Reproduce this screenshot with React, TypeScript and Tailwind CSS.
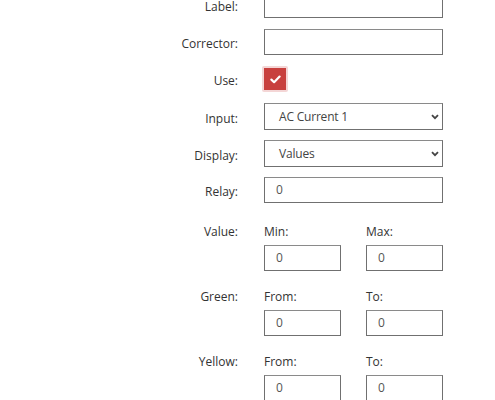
import { ReactNode } from 'react'

const font = { fontFamily: '"Open Sans", "Noto Sans", sans-serif' }

function Row({ label, children, className = '' }: { label: string; children: ReactNode; className?: string }) {
  return (
    <div className={`flex items-center ${className}`}>
      <div className="w-[238px] shrink-0 pt-[4px] text-right text-[12px] leading-[14px] text-[#333]">{label}</div>
      <div className="ml-[26px] w-[179px]">{children}</div>
    </div>
  )
}

function TextBox({ value = '', className = 'w-full' }: { value?: string; className?: string }) {
  return (
    <div className={`flex h-[26px] items-center border border-[#707070] border-t-[#8a8a8a] bg-white pl-[11px] text-[12px] text-[#555] ${className}`}>
      {value}
    </div>
  )
}

function Select({ value }: { value: string }) {
  return (
    <div className="flex h-[27px] w-full items-center justify-between border border-[#707070] border-t-[#8a8a8a] bg-white pl-[14px] pr-[2px] text-[12px] text-[#444]">
      <span className="tracking-[-0.2px]">{value}</span>
      <svg width="8" height="6" viewBox="0 0 8 6" className="mr-[1px]">
        <polyline points="1,1.2 4,4.2 7,1.2" fill="none" stroke="#444" strokeWidth="1.8" />
      </svg>
    </div>
  )
}

function Pair({ label, a, b, className = '' }: { label: string; a: string; b: string; className?: string }) {
  return (
    <div className={`flex ${className}`}>
      <div className="flex h-[18px] w-[238px] shrink-0 translate-y-[2px] items-center justify-end text-[12px] text-[#333]">{label}</div>
      <div className="ml-[26px] flex gap-[25px]">
        {[a, b].map(sub => (
          <div key={sub} className="w-[77px]">
            <div className="flex h-[18px] translate-y-[2px] items-center text-[12px] text-[#333]">{sub}</div>
            <TextBox value="0" className="mt-[6px] w-full" />
          </div>
        ))}
      </div>
    </div>
  )
}

export default function App() {
  return (
    <div className="h-[400px] w-[495px] overflow-hidden bg-white" style={font}>
      <div className="-mt-[8px] flex flex-col">
        <Row label="Label:">
          <TextBox />
        </Row>
        <Row label="Corrector:" className="mt-[11px]">
          <TextBox />
        </Row>
        <Row label="Use:" className="mt-[11px] h-[26px]">
          <div className="ml-[-2px] flex h-[26px] w-[26px] items-center justify-center rounded-[2px] bg-[#f4d6d6]">
            <div className="flex h-[22px] w-[22px] items-center justify-center bg-[#c8403e]">
              <svg width="11" height="9" viewBox="0 0 11 9">
                <polyline points="1.4,4.6 4.1,7.2 9.6,1.6" fill="none" stroke="white" strokeWidth="2.2" strokeLinecap="round" strokeLinejoin="round" />
              </svg>
            </div>
          </div>
        </Row>
        <Row label="Input:" className="mt-[11px]">
          <Select value="AC Current 1" />
        </Row>
        <Row label="Display:" className="mt-[10px]">
          <Select value="Values" />
        </Row>
        <Row label="Relay:" className="mt-[10px]">
          <TextBox value="0" />
        </Row>
        <Pair label="Value:" a="Min:" b="Max:" className="mt-[18px]" />
        <Pair label="Green:" a="From:" b="To:" className="mt-[15px]" />
        <Pair label="Yellow:" a="From:" b="To:" className="mt-[15px]" />
      </div>
    </div>
  )
}
